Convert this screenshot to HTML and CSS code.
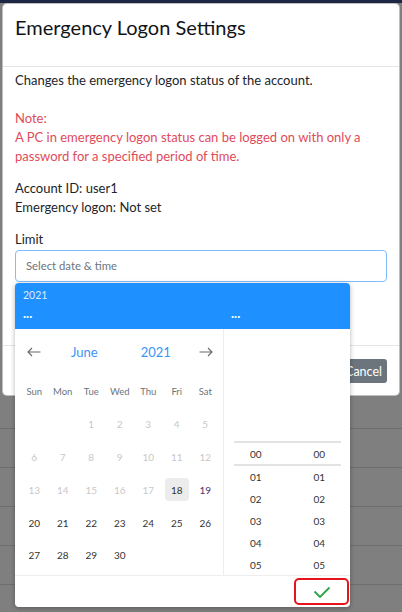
FILE: index.html
```html
<!DOCTYPE html>
<html>
<head>
<meta charset="utf-8">
<link rel="stylesheet" href="styles.css">
</head>
<body>
<div class="page">
  <div class="navbar"></div>
  <div class="rows">
    <div class="row"></div>
    <div class="row"></div>
    <div class="row"></div>
    <div class="row"></div>
    <div class="row"></div>
  </div>
</div>

<div class="modal">
  <div class="modal-header">
    <h5 class="modal-title">Emergency Logon Settings</h5>
  </div>
  <div class="modal-body">
    <p class="intro">Changes the emergency logon status of the account.</p>
    <p class="note">Note:<br>A PC in emergency logon status can be logged on with only a password for a specified period of time.</p>
    <p class="info">Account ID: user1<br>Emergency logon: Not set</p>
    <div class="label">Limit</div>
    <div class="input">Select date &amp; time</div>
  </div>
  <div class="modal-footer">
    <button class="btn">Cancel</button>
  </div>
</div>

<div class="picker">
  <div class="picker-head">
    <div class="head-year">2021</div>
    <div class="head-vals">
      <div class="head-date">...</div>
      <div class="head-time">...</div>
    </div>
  </div>
  <div class="picker-body">
    <div class="cal">
      <div class="cal-nav">
        <span class="arrow"><svg width="14" height="10" viewBox="0 0 14 10"><path d="M13.5 5H1M5 1L1 5l4 4" fill="none" stroke="#6b6b6b" stroke-width="1.1"/></svg></span>
        <span class="nav-txt">June</span>
        <span class="nav-txt">2021</span>
        <span class="arrow"><svg width="14" height="10" viewBox="0 0 14 10"><path d="M0.5 5H13M9 1l4 4-4 4" fill="none" stroke="#6b6b6b" stroke-width="1.1"/></svg></span>
      </div>
      <div class="cal-grid">
        <div class="wd">Sun</div><div class="wd">Mon</div><div class="wd">Tue</div><div class="wd">Wed</div><div class="wd">Thu</div><div class="wd">Fri</div><div class="wd">Sat</div>
        <div class="d"></div><div class="d"></div><div class="d off">1</div><div class="d off">2</div><div class="d off">3</div><div class="d off">4</div><div class="d off">5</div>
        <div class="d off">6</div><div class="d off">7</div><div class="d off">8</div><div class="d off">9</div><div class="d off">10</div><div class="d off">11</div><div class="d off">12</div>
        <div class="d off">13</div><div class="d off">14</div><div class="d off">15</div><div class="d off">16</div><div class="d off">17</div><div class="d today"><span>18</span></div><div class="d sat">19</div>
        <div class="d">20</div><div class="d">21</div><div class="d">22</div><div class="d">23</div><div class="d">24</div><div class="d">25</div><div class="d">26</div>
        <div class="d">27</div><div class="d">28</div><div class="d">29</div><div class="d">30</div><div class="d"></div><div class="d"></div><div class="d"></div>
      </div>
    </div>
    <div class="time">
      <div class="time-list">
        <div class="trow sel"><span>00</span><span>00</span></div>
        <div class="trow"><span>01</span><span>01</span></div>
        <div class="trow"><span>02</span><span>02</span></div>
        <div class="trow"><span>03</span><span>03</span></div>
        <div class="trow"><span>04</span><span>04</span></div>
        <div class="trow"><span>05</span><span>05</span></div>
      </div>
    </div>
  </div>
  <div class="picker-foot">
    <button class="ok"><svg width="18" height="12" viewBox="0 0 18 12"><path d="M1.5 5.5l5.5 5.5L16.5 1.5" fill="none" stroke="#28a745" stroke-width="1.8"/></svg></button>
  </div>
</div>
</body>
</html>
```
FILE: styles.css
```css
* { box-sizing: border-box; }
html, body { margin: 0; padding: 0; }
body {
  width: 402px;
  height: 612px;
  overflow: hidden;
  position: relative;
  background: #7f7f7f;
  font-family: "Lato", sans-serif;
  color: #212529;
}
.navbar { height: 3px; background: #1b2745; }
.rows { padding-top: 425px; }
.row { height: 39px; border-top: 1px solid #6e6e6e; }

.modal {
  position: absolute;
  left: 2px;
  top: 3px;
  width: 398px;
  background: #fff;
  border: 1px solid rgba(0,0,0,.25);
  border-radius: 5px;
}
.modal-header {
  height: 63px;
  padding: 8px 12px 0;
  border-bottom: 1px solid #e3e6e9;
}
.modal-title {
  margin: 0;
  font-size: 20px;
  line-height: 30px;
  font-weight: 400;
  color: #111417;
}
.modal-body {
  padding: 4px 12px 63px;
  font-size: 13px;
  line-height: 19px;
}
.modal-body p { margin: 0; }
.intro { margin-bottom: 19px !important; }
.note { color: #df4b5a; margin-bottom: 13px !important; }
.info { margin-bottom: 13px !important; }
.label { line-height: 19px; margin-bottom: 1px; }
.input {
  height: 32px;
  border: 1px solid #80bdff;
  border-radius: 4px;
  padding: 0 10px;
  font-size: 11.3px;
  line-height: 30px;
  color: #6c757d;
}
.modal-footer {
  display: flex;
  justify-content: flex-end;
  padding: 13px 12px 12px;
  border-top: 1px solid #e3e6e9;
}
.btn {
  height: 24px;
  padding: 0 5px 0 12px;
  border: none;
  border-radius: 3px;
  background: #6c757d;
  color: #fff;
  font-family: "Lato", sans-serif;
  font-size: 12.5px;
}

.picker {
  position: absolute;
  left: 15px;
  top: 283px;
  width: 335px;
  height: 324px;
  background: #fff;
  border-radius: 4px;
  box-shadow: 0 1px 5px rgba(0,0,0,.3);
  overflow: hidden;
  display: flex;
  flex-direction: column;
}
.picker-head {
  height: 46px;
  background: #1e90ff;
  color: #fff;
  padding: 5px 0 0 8px;
}
.head-year { font-size: 10.5px; line-height: 15px; color: rgba(255,255,255,.85); }
.head-vals { display: flex; font-size: 13px; line-height: 20px; font-weight: 700; }
.head-date { width: 208px; }

.picker-body { display: flex; height: 246px; }
.cal { width: 208px; padding: 0 3px 0 5px; }
.cal-nav {
  height: 46px;
  display: grid;
  grid-template-columns: 28.5px 1fr 1fr 28.5px;
  align-items: center;
  justify-items: center;
}
.arrow { display: flex; }
.nav-txt { color: #3c94f5; font-size: 13px; }
.cal-grid {
  display: grid;
  grid-template-columns: repeat(7, 28.5px);
  grid-template-rows: 33px;
  grid-auto-rows: 32.75px;
  align-items: center;
  justify-items: center;
  font-size: 10px;
}
.wd { color: #6c757d; font-size: 9.5px; }
.d { color: #333; }
.d.off { color: #c8c8c8; }
.d.sat { color: #4a2d6e; }
.d.today span {
  display: flex;
  width: 24px;
  height: 23px;
  align-items: center;
  justify-content: center;
  background: #ececec;
  border-radius: 4px;
}

.time {
  flex: 1;
  border-left: 1px solid #eee;
  padding: 112px 9px 0 10px;
  overflow: hidden;
}
.trow {
  display: flex;
  gap: 20px;
  height: 22px;
  align-items: center;
  font-size: 10px;
  color: #333;
}
.trow span { width: 44px; text-align: center; }
.trow.sel {
  height: 25px;
  border-top: 2px solid #e3e3e3;
  border-bottom: 2px solid #e3e3e3;
}
.picker-foot {
  flex: 1;
  border-top: 1px solid #eee;
  display: flex;
  justify-content: flex-end;
  align-items: center;
  padding-right: 1px;
}
.ok {
  width: 55px;
  height: 27px;
  border: 2px solid #e8141c;
  border-radius: 5px;
  background: #fff;
  display: flex;
  align-items: center;
  justify-content: center;
  padding: 0;
}
```
